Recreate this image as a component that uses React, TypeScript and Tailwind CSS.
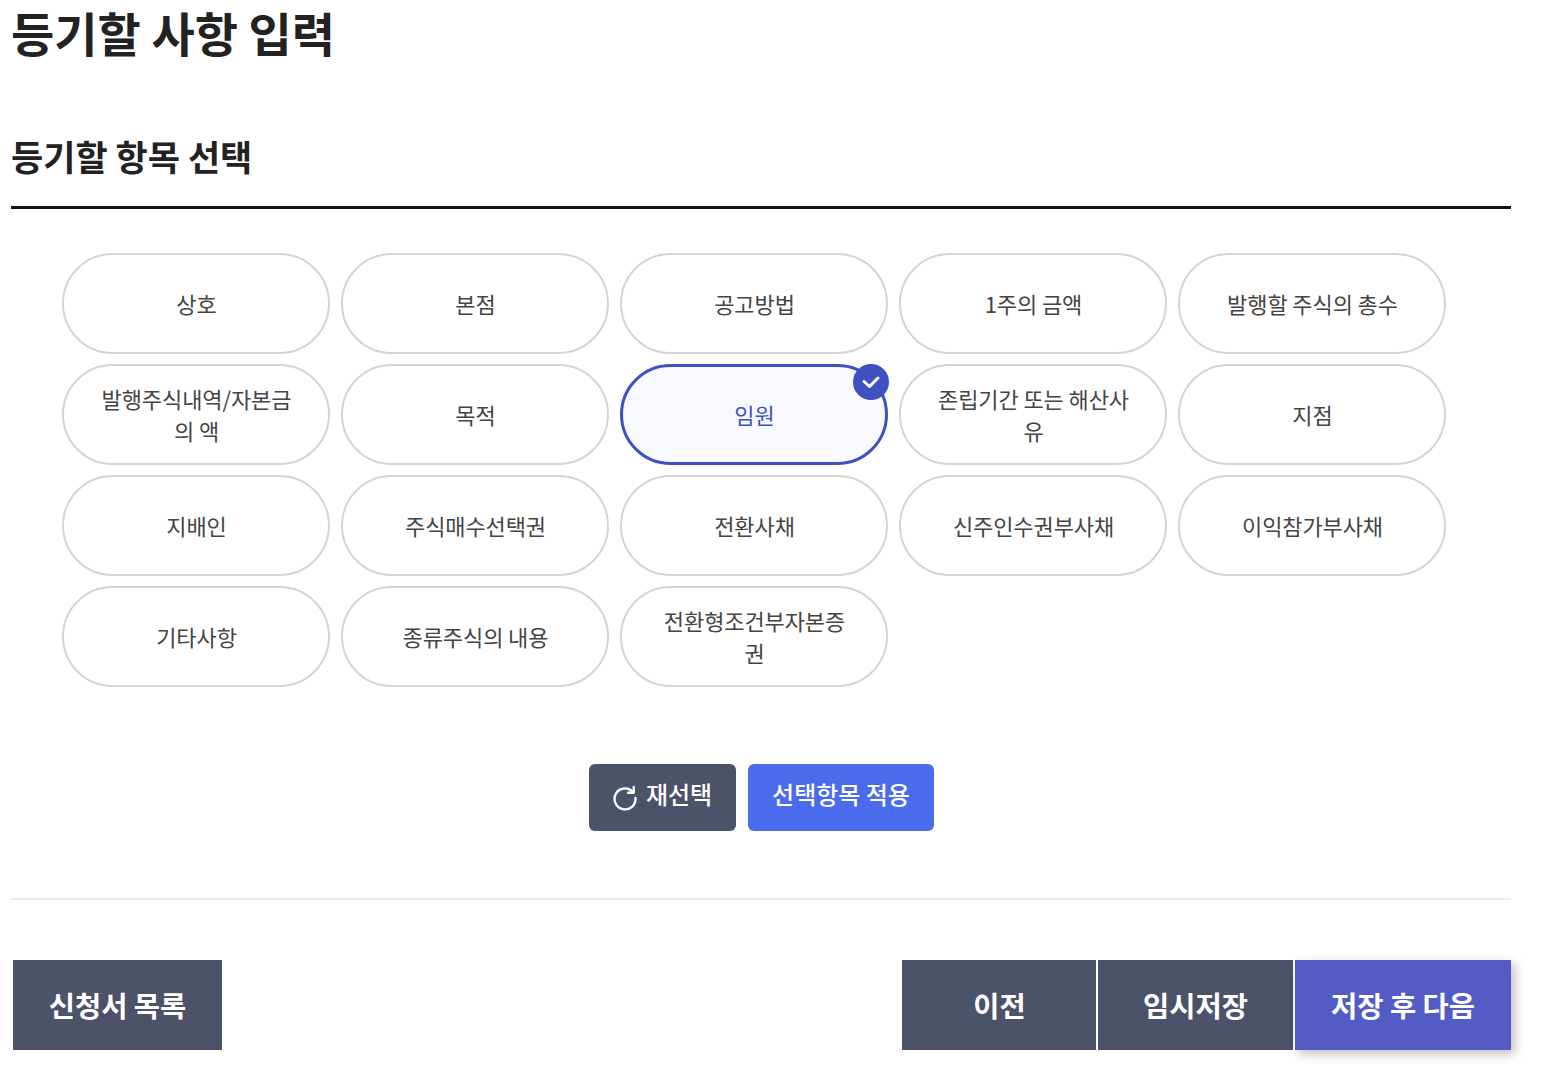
import React from "react";

const rows: string[] = [
  "상호","본점","공고방법","1주의 금액","발행할 주식의 총수",
  "발행주식내역/자본금의 액","목적","임원","존립기간 또는 해산사유","지점",
  "지배인","주식매수선택권","전환사채","신주인수권부사채","이익참가부사채",
  "기타사항","종류주식의 내용","전환형조건부자본증권",
];

function Pill({ label }: { label: string }) {
  const on = label === "임원";
  return (
    <div
      className={
        on
          ? "relative h-[101px] rounded-[51px] border-[3px] border-[#3f51c0] bg-[#f8f9ff] flex items-center justify-center pl-[36px] pr-[35px] pb-[2px] text-center text-[22px] leading-[32px] tracking-[-0.1px] text-[#3f51c0]"
          : "relative h-[101px] rounded-[51px] border-2 border-[#d4d4d4] bg-white flex items-center justify-center pl-[37px] pr-[36px] pb-[2px] text-center text-[22px] leading-[32px] tracking-[-0.1px] text-[#444]"
      }
    >
      <span className="break-all">{label}</span>
      {on && (
        <span className="absolute -top-[3px] -right-[4px] w-9 h-9 rounded-full bg-[#3f51c0] flex items-center justify-center">
          <svg width="22" height="22" viewBox="0 0 22 22" fill="none" stroke="white" strokeWidth="3" strokeLinecap="round" strokeLinejoin="round">
            <path d="M4 10.5l5.5 5 8.5-8.5" />
          </svg>
        </span>
      )}
    </div>
  );
}

export default function App() {
  return (
    <div className="w-[1541px] h-[1070px] overflow-hidden bg-white pl-[11px] font-['Noto_Sans_CJK_KR','Noto_Sans',sans-serif]">
      <div className="w-[1500px]">
        <h1 className="h-[67px] text-[47px] leading-[63px] font-bold text-[#222]">등기할 사항 입력</h1>
        <div className="mt-[51px] h-[91px] border-b-[3px] border-[#111] pt-[15px]">
          <h2 className="text-[35px] leading-[46px] font-bold text-[#222]">등기할 항목 선택</h2>
        </div>
        <div className="mt-[44px] ml-[51px] grid grid-cols-[repeat(5,268px)] gap-x-[11px] gap-y-[10px]">
          {rows.map((r) => (
            <Pill key={r} label={r} />
          ))}
        </div>
        <div className="mt-[77px] flex justify-center gap-3">
          <button className="h-[67px] w-[147px] rounded-md bg-[#4b5269] text-white text-[24px] leading-[30px] font-medium flex items-center justify-center gap-[7px] pb-[7px]">
            <svg width="28" height="28" viewBox="0 0 24 24" fill="none" stroke="white" strokeWidth="2" strokeLinecap="round" strokeLinejoin="round" className="mt-[7px] -ml-px">
              <path d="M18.5 6.5A9 9 0 1 0 21 12" />
              <path d="M19.5 2.5v5h-5" />
            </svg>
            재선택
          </button>
          <button className="h-[67px] w-[186px] rounded-md bg-[#4a6cec] text-white text-[24px] leading-[30px] font-medium pb-[7px] pl-px">선택항목 적용</button>
        </div>
        <div className="mt-[67px] border-t-2 border-[#e9ecef]" />
        <div className="mt-[60px] flex justify-between pl-[2px]">
          <button className="h-[90px] w-[209px] bg-[#4b5269] text-white text-[28.5px] font-bold">신청서 목록</button>
          <div className="flex">
            <button className="h-[90px] w-[194px] mr-[2px] bg-[#4b5269] text-white text-[28.5px] font-bold pl-px">이전</button>
            <button className="h-[90px] w-[195px] mr-[2px] bg-[#4b5269] text-white text-[28.5px] font-bold">임시저장</button>
            <button className="h-[90px] w-[216px] bg-[#535cc4] text-white text-[28.5px] font-bold shadow-[4px_4px_10px_rgba(0,0,0,0.25)]">저장 후 다음</button>
          </div>
        </div>
      </div>
    </div>
  );
}
